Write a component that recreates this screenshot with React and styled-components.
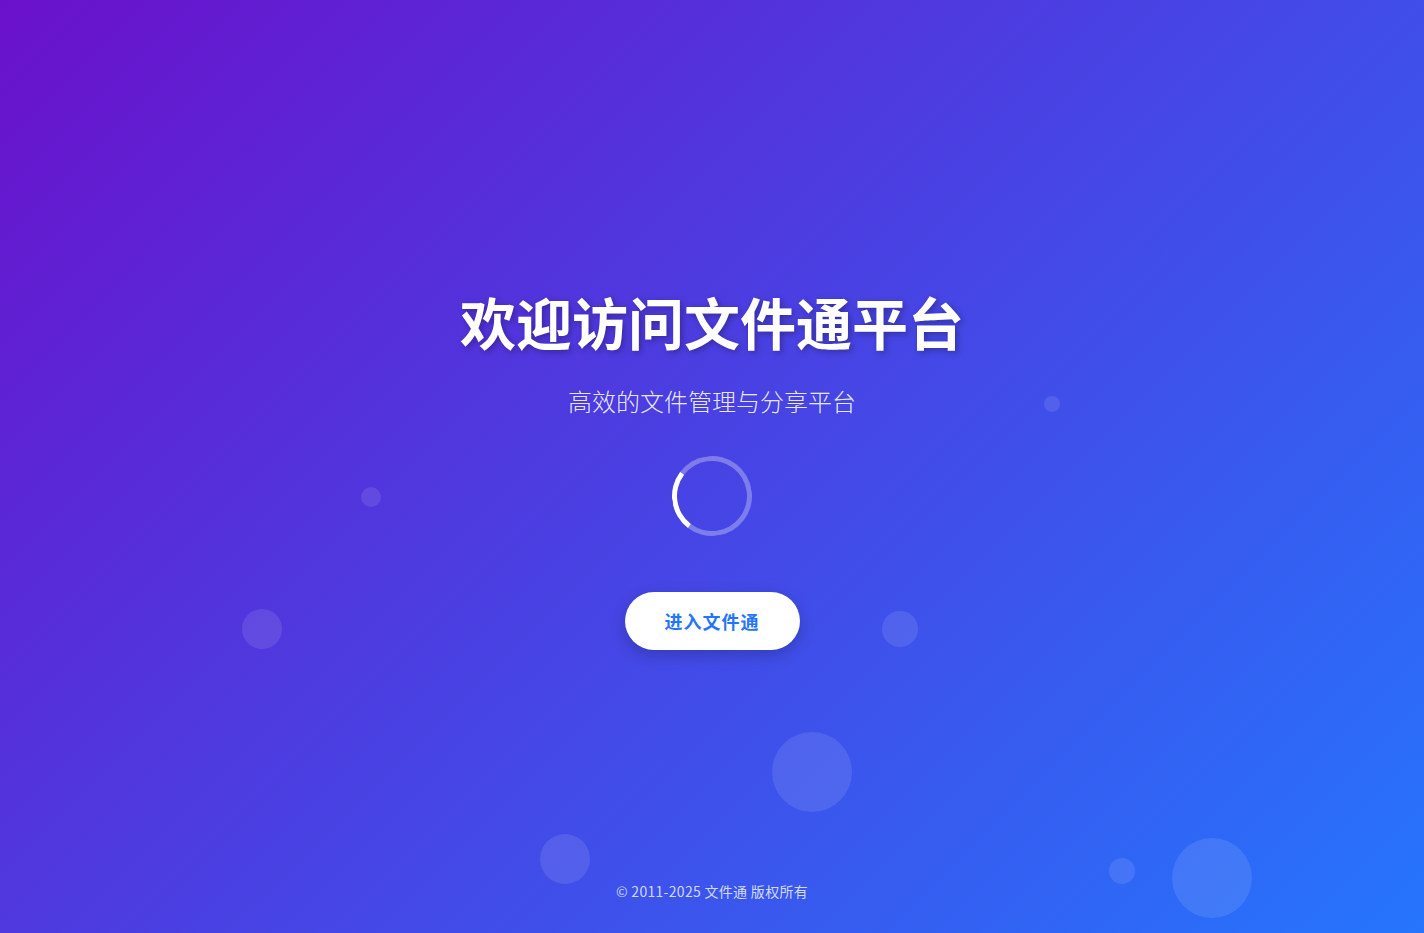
import React from 'react';
import styled, { createGlobalStyle } from 'styled-components';

const GlobalStyle = createGlobalStyle`
  html, body {
    margin: 0;
    padding: 0;
    height: 100%;
  }
  body {
    font-family: "Noto Sans CJK SC", "Noto Sans", sans-serif;
    overflow: hidden;
  }
  * {
    box-sizing: border-box;
  }
`;

const Page = styled.div`
  position: relative;
  display: flex;
  flex-direction: column;
  min-height: 100vh;
  overflow: hidden;
  background: linear-gradient(135deg, #6a11cb 0%, #2575fc 100%);
  color: #fff;
`;

// decorative floating circles
const Bubble = styled.span`
  position: absolute;
  left: ${p => p.$x - p.$size / 2}px;
  top: ${p => p.$y - p.$size / 2}px;
  width: ${p => p.$size}px;
  height: ${p => p.$size}px;
  border-radius: 50%;
  background: rgba(255, 255, 255, 0.1);
  pointer-events: none;
`;

const Hero = styled.main`
  position: relative;
  z-index: 1;
  flex: 1;
  display: flex;
  flex-direction: column;
  align-items: center;
  justify-content: center;
  padding-top: 56px;
  text-align: center;
`;

const Title = styled.h1`
  margin: 0 0 29px;
  font-size: 56px;
  line-height: 67px;
  font-weight: 700;
  text-shadow: 2px 2px 6px rgba(0, 0, 0, 0.3);
`;

const Subtitle = styled.p`
  margin: 0 0 37px;
  font-size: 24px;
  line-height: 36px;
  font-weight: 300;
  color: rgba(255, 255, 255, 0.9);
`;

const Spinner = styled.div`
  width: 80px;
  height: 80px;
  margin-bottom: 56px;
  border-radius: 50%;
  border: 5px solid rgba(255, 255, 255, 0.3);
  border-left-color: #fff;
  transform: rotate(-8deg);
`;

const EnterButton = styled.button`
  height: 58px;
  padding: 0 40px;
  border: none;
  border-radius: 29px;
  background: #fff;
  color: #2575fc;
  font-family: inherit;
  font-size: 18px;
  font-weight: 700;
  letter-spacing: 1px;
  cursor: pointer;
  box-shadow: 0 5px 15px rgba(0, 0, 0, 0.2);
`;

const Footer = styled.footer`
  position: relative;
  z-index: 1;
  padding: 0 0 32px;
  text-align: center;
  font-size: 14px;
  line-height: 20px;
  letter-spacing: 0.3px;
  color: rgba(255, 255, 255, 0.78);
`;

const bubbles = [
  { x: 1052, y: 404, size: 16 },
  { x: 371, y: 497, size: 20 },
  { x: 262, y: 629, size: 40 },
  { x: 900, y: 629, size: 36 },
  { x: 812, y: 772, size: 80 },
  { x: 565, y: 859, size: 50 },
  { x: 1122, y: 871, size: 26 },
  { x: 1212, y: 878, size: 80 },
];

export default function App() {
  return (
    <>
      <GlobalStyle />
      <Page>
        {bubbles.map((b, i) => (
          <Bubble key={i} $x={b.x} $y={b.y} $size={b.size} />
        ))}
        <Hero>
          <Title>欢迎访问文件通平台</Title>
          <Subtitle>高效的文件管理与分享平台</Subtitle>
          <Spinner />
          <EnterButton>进入文件通</EnterButton>
        </Hero>
        <Footer>© 2011-2025 文件通 版权所有</Footer>
      </Page>
    </>
  );
}
